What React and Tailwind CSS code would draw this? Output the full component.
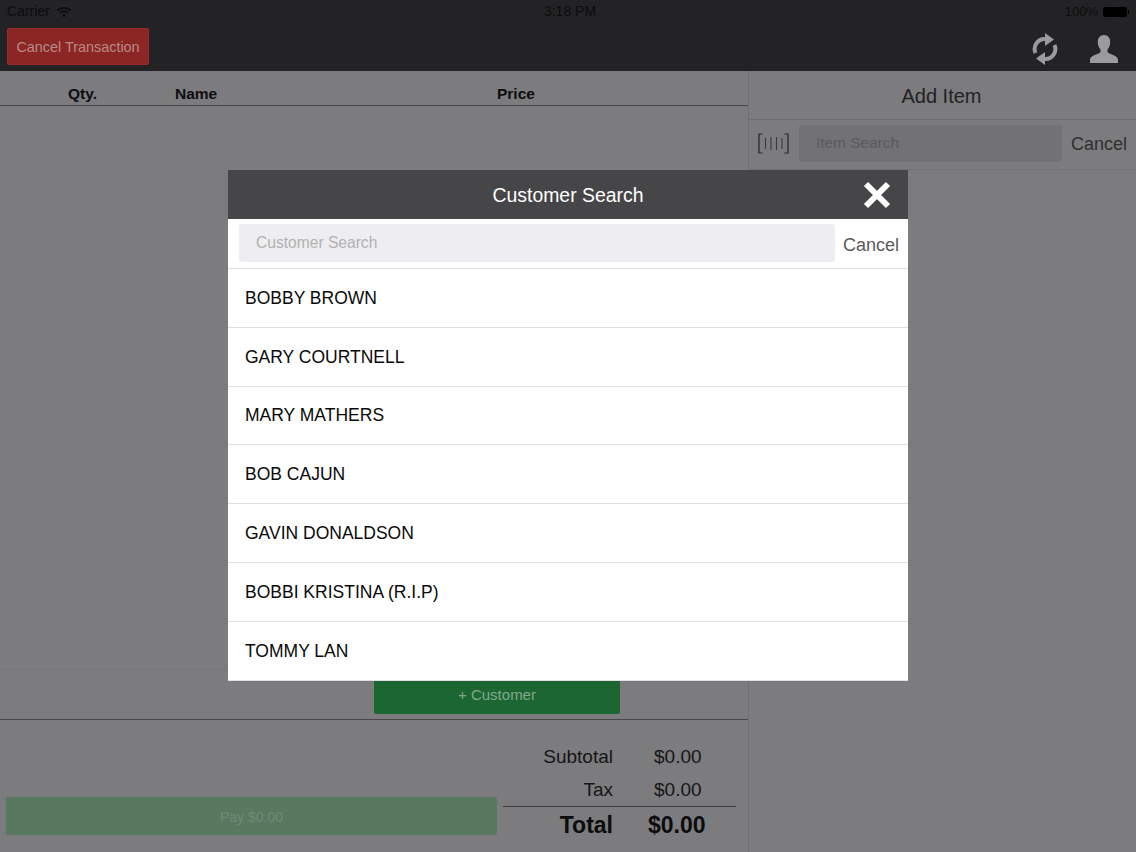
import React from "react";
import { FaWifi } from "react-icons/fa";

const customers = [
  "BOBBY BROWN",
  "GARY COURTNELL",
  "MARY MATHERS",
  "BOB CAJUN",
  "GAVIN DONALDSON",
  "BOBBI KRISTINA (R.I.P)",
  "TOMMY LAN",
];

function BarcodeIcon() {
  return (
    <svg width="31" height="21" viewBox="0 0 31 21" fill="none" stroke="#262527" strokeWidth="1.2">
      <path d="M4.500 1H1V20H4.500" />
      <path d="M26.500 1H30V20H26.500" />
      <path d="M7.500 5V16M13 4V17M18.500 4V17M24 5V16" stroke="#3a393b" strokeWidth="1.100" />
    </svg>
  );
}

function SyncIcon() {
  return (
    <svg width="26" height="32" viewBox="0 0 26 32" fill="none" stroke="#9b9a9c" strokeWidth="4">
      <path d="M3.500 20A10 10 0 0 1 13 6" />
      <path d="M22.500 12A10 10 0 0 1 13 26" />
      <path d="M13 0L22 6.500L13 13Z" fill="#9b9a9c" stroke="none" />
      <path d="M13 19L4 25.500L13 32Z" fill="#9b9a9c" stroke="none" />
    </svg>
  );
}

function UserIcon() {
  return (
    <svg width="28" height="28" viewBox="0 0 28 28" fill="#9b9a9c">
      <path d="M14 0c-4 0-6.200 3-6.200 7 0 3 1 5.600 2.600 7.400.5 1.400.2 3-1 3.700C6 20 .5 21 0 24.500V28h28v-3.500c-.5-3.500-6-4.500-9.400-6.400-1.200-.7-1.500-2.300-1-3.700C19.200 12.600 20.200 10 20.200 7c0-4-2.200-7-6.200-7z" />
    </svg>
  );
}

function CloseIcon() {
  return (
    <svg width="28" height="28" viewBox="0 0 28 28" fill="none" stroke="#ffffff" strokeWidth="6">
      <path d="M3 3L25 25M25 3L3 25" />
    </svg>
  );
}

function SummaryRow({ label, value }) {
  return (
    <div className="flex h-[33px] items-center pt-[2px] text-[19px] text-[#161517]">
      <span className="w-[110px] text-right">{label}</span>
      <span className="w-[123px] pl-[41px]">{value}</span>
    </div>
  );
}

export default function App() {
  return (
    <div className="relative flex h-[852px] w-[1136px] flex-col overflow-hidden bg-[#7c7b7d] font-['Liberation_Sans',sans-serif]">
      {/* top bar */}
      <div className="h-[71px] shrink-0 bg-[#232224]">
        <div className="flex h-[23px] items-center justify-between pl-[7px] pr-[7px] text-[14px] text-[#0c0b0d]">
          <div className="flex w-[200px] items-center gap-[7px]">
            <span>Carrier</span>
            <FaWifi size={14} />
          </div>
          <span className="pl-[4px]">3:18 PM</span>
          <div className="flex w-[200px] items-center justify-end gap-[5px] text-[13px]">
            <span>100%</span>
            <div className="flex items-center gap-[1px]">
              <div className="h-[10px] w-[24px] rounded-[2px] bg-black" />
              <div className="h-[4px] w-[1px] bg-black" />
            </div>
          </div>
        </div>
        <div className="flex items-start justify-between pl-[7px] pr-[18px]">
          <button className="mt-[5px] h-[37px] w-[142px] rounded-[2px] border border-[#982c2c] bg-[#8c2624] pt-[2px] text-[14.400px] text-[#b88a86]">
            Cancel Transaction
          </button>
          <div className="mt-[10px] flex items-center gap-[32px]">
            <SyncIcon />
            <UserIcon />
          </div>
        </div>
      </div>

      <div className="flex min-h-0 flex-1">
        {/* sale column */}
        <div className="flex w-[749px] shrink-0 flex-col border-r border-[#6f6e70]">
          <div className="flex h-[35px] shrink-0 items-end border-b border-[#484749] text-[15.500px] font-bold text-[#0e0d0f]">
            <span className="ml-[68px] w-[107px]">Qty.</span>
            <span className="w-[322px]">Name</span>
            <span>Price</span>
          </div>
          <div className="flex-1 border-b border-[#767577]" />
          <div className="h-[50px] shrink-0 border-b border-[#484749] pl-[374px] pt-[1px]">
            <button className="h-[43px] w-[246px] rounded-[2px] bg-[#1b6631] pt-[5px] text-[15px] text-[#84a88e]">
              + Customer
            </button>
          </div>
          <div className="flex h-[132px] shrink-0">
            <div className="flex w-[503px] shrink-0 items-end pb-[17px] pl-[6px]">
              <button className="h-[38px] w-[491px] rounded-[2px] bg-[#587860] pt-[2px] text-[14px] text-[#6c8c75]">
                Pay $0.00
              </button>
            </div>
            <div className="w-[233px] pt-[20px]">
              <SummaryRow label="Subtotal" value="$0.00" />
              <SummaryRow label="Tax" value="$0.00" />
              <div className="flex h-[37px] items-center border-t border-[#3c3b3d] text-[23px] font-bold text-[#0c0b0d]">
                <span className="w-[110px] text-right">Total</span>
                <span className="w-[123px] pl-[35px]">$0.00</span>
              </div>
            </div>
          </div>
        </div>

        {/* add item column */}
        <div className="flex-1">
          <div className="flex h-[49px] items-center justify-center border-b border-[#6c6b6d] pr-[2px] pt-[1px] text-[20px] text-[#232224]">
            Add Item
          </div>
          <div className="flex h-[50px] items-start border-b border-[#747375] pl-[9px] pt-[5px]">
            <div className="mt-[8px]">
              <BarcodeIcon />
            </div>
            <div className="ml-[10px] flex h-[37px] w-[263px] items-center rounded-[3px] bg-[#727173] pb-[2px] pl-[17px] text-[15.400px] text-[#5c5b5d]">
              Item Search
            </div>
            <span className="ml-[9px] mt-[6px] text-[18px] text-[#302f31]">Cancel</span>
          </div>
        </div>
      </div>

      {/* customer search modal */}
      <div className="absolute left-[228px] top-[170px] w-[680px] bg-white">
        <div className="relative flex h-[49px] items-center justify-center bg-[#464547] pt-[2px] text-[19.400px] text-white">
          Customer Search
          <div className="absolute right-[17px] top-[11px]">
            <CloseIcon />
          </div>
        </div>
        <div className="flex h-[50px] items-start border-b border-[#dddcde] pl-[11px] pt-[5px]">
          <div className="flex h-[38px] w-[596px] items-center rounded-[3px] bg-[#eeedef] pl-[17px] text-[15.600px] text-[#b2b1b3]">
            Customer Search
          </div>
          <span className="ml-[8px] mt-[8px] text-[18px] text-[#5a595b]">Cancel</span>
        </div>
        <div className="h-[412px] overflow-hidden border-b border-[#dfdee0]">
          {customers.map((name) => (
            <div key={name} className="flex h-[58.800px] items-center border-b border-[#dfdee0] pl-[17px] text-[17.500px] text-[#0a0a0a]">
              {name}
            </div>
          ))}
        </div>
      </div>
    </div>
  );
}
